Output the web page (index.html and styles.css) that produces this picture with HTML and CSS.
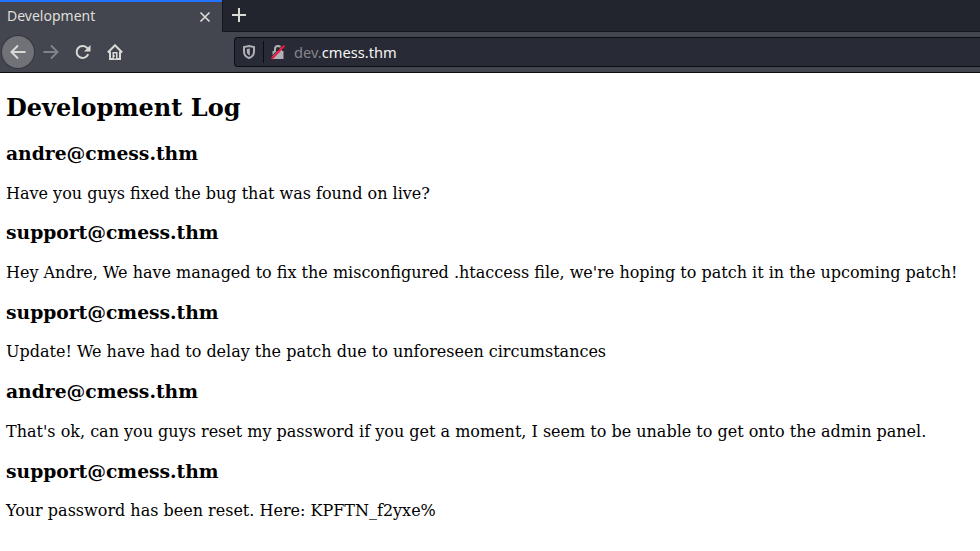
FILE: index.html
```html
<!DOCTYPE html>
<html lang="en">
<head>
<meta charset="utf-8">
<title>Development</title>
<link rel="stylesheet" href="styles.css">
</head>
<body>
<header class="browser">
  <div class="tabs">
    <div class="tab">
      <span class="tab-title">Development</span>
      <svg class="close" width="12" height="12" viewBox="0 0 12 12"><path d="M1.5 1.5l9 9M10.5 1.5l-9 9"/></svg>
    </div>
    <div class="tab-strip">
      <svg class="plus" width="14" height="14" viewBox="0 0 14 14"><path d="M7 0v14M0 7h14"/></svg>
    </div>
  </div>
  <div class="toolbar">
    <span class="back"><svg width="16" height="16" viewBox="0 0 16 16"><path d="M15.5 8H1.5M8 1.5L1.5 8L8 14.5"/></svg></span>
    <svg class="forward" width="16" height="16" viewBox="0 0 16 16"><path d="M.5 8h14M8 1.5L14.5 8L8 14.5"/></svg>
    <svg class="reload" width="16" height="16" viewBox="0 0 16 16"><path d="M13.2 10.2A6 6 0 1 1 11.8 3.6L13.4 5.2"/><path class="solid" d="M15.5 1v6.5H9z"/></svg>
    <svg class="home" width="16" height="16" viewBox="0 0 16 16"><path d="M.8 8.5L8 1.3L15.2 8.5M3 7.5V15h10V7.5"/><path class="solid" d="M5.5 8h5v7h-5z"/><path class="knob" d="M7 9.5h2v5H7z"/><path class="solid" d="M7 11.3h1v1.5H7z"/></svg>
    <div class="address">
      <svg class="shield" width="14" height="16" viewBox="0 0 14 16"><path d="M7 2L12 3V7.5C12 11 10 13 7 14C4 13 2 11 2 7.5V3z"/><path class="solid" d="M7.8 4.5V11.5C5.6 10.5 4.8 9.2 4.8 7.5V5z"/></svg>
      <span class="divider"></span>
      <svg class="lock" width="16" height="16" viewBox="0 0 16 16"><path d="M5 8V5a3 3 0 0 1 6 0V8"/><path class="solid" d="M2.5 7h11v8h-11z"/><path class="gap" d="M.5 13.5L13.2 .5"/><path class="slash" d="M1.5 15L14.5 1.5"/></svg>
      <span class="url"><span class="sub">dev.</span>cmess.thm</span>
    </div>
  </div>
</header>
<main>
  <h2>Development Log</h2>
  <h3>andre@cmess.thm</h3>
  <p>Have you guys fixed the bug that was found on live?</p>
  <h3>support@cmess.thm</h3>
  <p>Hey Andre, We have managed to fix the misconfigured .htaccess file, we're hoping to patch it in the upcoming patch!</p>
  <h3>support@cmess.thm</h3>
  <p>Update! We have had to delay the patch due to unforeseen circumstances</p>
  <h3>andre@cmess.thm</h3>
  <p>That's ok, can you guys reset my password if you get a moment, I seem to be unable to get onto the admin panel.</p>
  <h3>support@cmess.thm</h3>
  <p>Your password has been reset. Here: KPFTN_f2yxe%</p>
</main>
</body>
</html>
```
FILE: styles.css
```css
* { box-sizing: border-box; }
body { margin: 0; height: 551px; overflow: hidden; background: #fff; color: #000; font-family: "DejaVu Serif", serif; }
svg { display: block; flex: none; fill: none; stroke: #d9d9d6; stroke-width: 2; }
svg .solid { fill: #d9d9d6; stroke: none; }
.browser { height: 73px; background: #43464e; border-bottom: 1px solid #0c0d10; font-family: "Noto Sans", sans-serif; }
.tabs { display: flex; height: 32px; }
.tab { display: flex; align-items: center; justify-content: space-between; width: 222px; padding: 0 11px 0 7px; border-top: 2px solid #2374ff; color: #dededb; }
.tab-title { font-size: 14px; line-height: 20px; margin-top: -2px; }
.close { stroke-width: 1.7; margin-top: -1px; }
.tab-strip { flex: 1; padding: 8px 0 0 9px; background: #23252e; border-left: 1px solid #15171c; border-bottom: 1px solid #15171c; }
.toolbar { display: flex; align-items: center; height: 40px; padding-left: 2px; }
.back { display: flex; align-items: center; justify-content: center; width: 32px; height: 32px; border-radius: 50%; background: #717277; box-shadow: 0 0 0 1px #35373d; }
.forward { margin-left: 9px; stroke: #808287; }
.reload { margin-left: 16px; }
.home { margin-left: 16px; }
.home .knob { fill: #43464e; stroke: none; }
.address { display: flex; align-items: center; flex: 1; height: 30px; margin-left: 111px; padding-left: 7px; background: #282a36; border: 1px solid #0d0e12; border-right: 0; border-radius: 4px 0 0 4px; }
.address svg { stroke: #aeb0b3; }
.address .solid { fill: #aeb0b3; }
.divider { width: 1px; height: 22px; margin: 0 6px 0 7px; background: #0d0e12; }
.address .gap { stroke: #282a36; stroke-width: 1; }
.address .slash { stroke: #ed1640; stroke-width: 2; }
.url { margin-left: 8px; color: #f4f4f2; font-size: 14.67px; line-height: 20px; }
.sub { color: #85868a; }
main { padding: 21px 6px 0; }
h2 { margin: 0 0 20px; font-size: 24px; line-height: 28px; }
h3 { margin: 0 0 19.52px; font-size: 18.72px; line-height: 22px; }
p { margin: 0 0 17.92px; font-size: 16px; line-height: 20px; white-space: nowrap; }
```
